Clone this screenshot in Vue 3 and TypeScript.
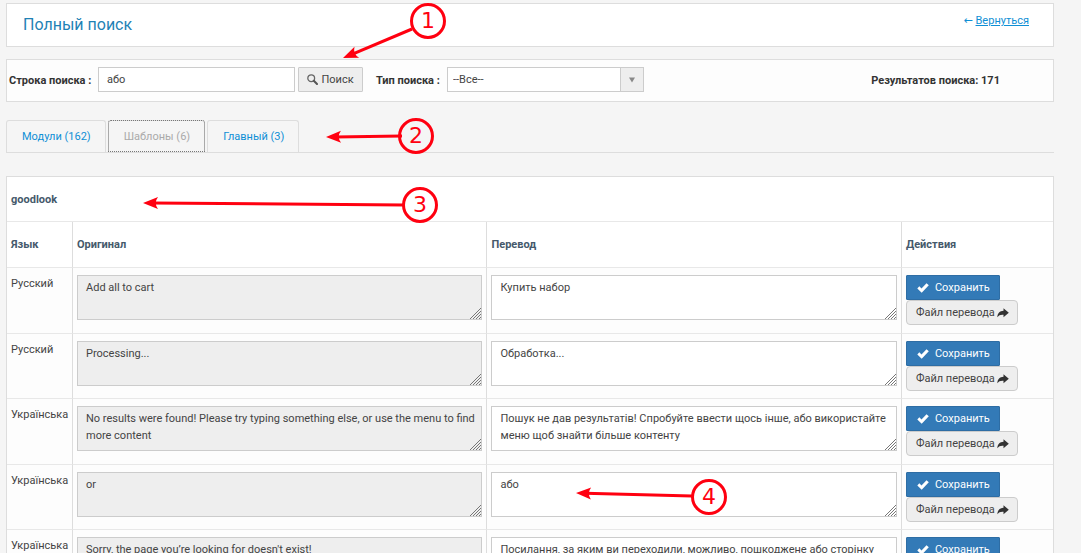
<script setup lang="ts">
import { ref } from 'vue'

interface Tab {
  id: string
  title: string
  count: number
}

interface Entry {
  lang: string
  original: string
  translation: string
}

interface Mark {
  label: number
  cx: number
  cy: number
  from: [number, number]
  tip: [number, number]
}

const query = ref('або')
const searchType = ref('all')
const activeTab = ref('templates')
const total = 171

const tabs: Tab[] = [
  { id: 'modules', title: 'Модули', count: 162 },
  { id: 'templates', title: 'Шаблоны', count: 6 },
  { id: 'main', title: 'Главный', count: 3 },
]

const entries = ref<Entry[]>([
  { lang: 'Русский', original: 'Add all to cart', translation: 'Купить набор' },
  { lang: 'Русский', original: 'Processing...', translation: 'Обработка...' },
  {
    lang: 'Українська',
    original: 'No results were found! Please try typing something else, or use the menu to find more content',
    translation: 'Пошук не дав результатів! Спробуйте ввести щось інше, або використайте меню щоб знайти більше контенту',
  },
  { lang: 'Українська', original: 'or', translation: 'або' },
  {
    lang: 'Українська',
    original: "Sorry, the page you’re looking for doesn't exist!",
    translation: 'Посилання, за яким ви переходили, можливо, пошкоджене або сторінку',
  },
])

const marks: Mark[] = [
  { label: 1, cx: 428, cy: 21, from: [412, 29], tip: [343, 58] },
  { label: 2, cx: 416, cy: 136, from: [402, 136], tip: [326, 137] },
  { label: 3, cx: 420, cy: 205, from: [404, 205], tip: [143, 203] },
  { label: 4, cx: 709, cy: 497, from: [692, 496], tip: [576, 493] },
]

function angle(m: Mark): number {
  return (Math.atan2(m.tip[1] - m.from[1], m.tip[0] - m.from[0]) * 180) / Math.PI
}

function length(m: Mark): number {
  return Math.hypot(m.tip[0] - m.from[0], m.tip[1] - m.from[1])
}
</script>

<template>
  <main class="page">
    <header class="panel heading">
      <h1>Полный поиск</h1>
      <div class="back"><span class="arrow">←</span> <a href="#">Вернуться</a></div>
    </header>

    <form class="panel search" @submit.prevent>
      <label class="query-label" for="query">Строка поиска :</label>
      <input id="query" v-model="query" class="query" type="text" />
      <button class="find" type="submit">
        <svg width="11" height="11" viewBox="0 0 11 11" aria-hidden="true">
          <circle cx="4.2" cy="4.2" r="3.4" fill="none" stroke="#666" stroke-width="1.3" />
          <path d="M6.8 6.8L10 10" stroke="#555" stroke-width="2" stroke-linecap="round" />
        </svg>
        Поиск
      </button>
      <label class="type-label" for="type">Тип поиска :</label>
      <div class="select-box">
        <select id="type" v-model="searchType">
          <option value="all">--Все--</option>
        </select>
        <span class="caret">
          <svg width="8" height="6" viewBox="0 0 8 6" aria-hidden="true"><path d="M1 0.5H7L4 5.5Z" fill="#888" /></svg>
        </span>
      </div>
      <strong class="total">Результатов поиска: {{ total }}</strong>
    </form>

    <nav class="tabs">
      <button
        v-for="tab in tabs"
        :key="tab.id"
        type="button"
        class="tab"
        :class="{ active: tab.id === activeTab }"
        @click="activeTab = tab.id"
      >
        {{ tab.title }} ({{ tab.count }})
      </button>
    </nav>

    <table class="results">
      <colgroup>
        <col class="col-lang" />
        <col />
        <col />
        <col class="col-actions" />
      </colgroup>
      <thead>
        <tr>
          <th colspan="4">goodlook</th>
        </tr>
        <tr class="columns">
          <th>Язык</th>
          <th>Оригинал</th>
          <th>Перевод</th>
          <th>Действия</th>
        </tr>
      </thead>
      <tbody>
        <tr v-for="(entry, i) in entries" :key="i">
          <td>{{ entry.lang }}</td>
          <td>
            <textarea class="original" readonly aria-label="Оригинал" :value="entry.original"></textarea>
          </td>
          <td>
            <textarea v-model="entry.translation" aria-label="Перевод"></textarea>
          </td>
          <td>
            <div class="actions">
              <button type="button" class="save">
                <svg width="12" height="10" viewBox="0 0 12 10" aria-hidden="true">
                  <path d="M0.3 5.5L2.3 3.3L4.5 5.4L9.5 0.2L11.8 2.2L4.7 9.8Z" fill="#fff" />
                </svg>
                Сохранить
              </button>
              <button type="button" class="file">
                Файл перевода
                <svg width="12" height="10" viewBox="0 0 12 10" aria-hidden="true">
                  <path d="M6.5 0.3L11.8 4.8L6.5 9.2V6.7C3.7 6.5 1.8 7 0.3 9.3C0.5 5.2 2.8 2.8 6.5 2.7Z" fill="#333" />
                </svg>
              </button>
            </div>
          </td>
        </tr>
      </tbody>
    </table>

    <svg class="marks" width="1081" height="553" viewBox="0 0 1081 553" aria-hidden="true">
      <g v-for="m in marks" :key="m.label">
        <g :transform="`translate(${m.from[0]} ${m.from[1]}) rotate(${angle(m)})`">
          <line x1="0" y1="0" :x2="length(m) - 9" y2="0" />
          <path :transform="`translate(${length(m)} 0)`" d="M0 0L-15 -6Q-10.500 0 -15 6Z" />
        </g>
        <circle :cx="m.cx" :cy="m.cy" r="16.500" />
        <text :x="m.cx" :y="m.cy + 7">{{ m.label }}</text>
      </g>
    </svg>
  </main>
</template>

<style>
html,
body {
  overflow: hidden;
  background: #f5f5f5;
}
</style>

<style scoped>
.page {
  position: relative;
  height: 100vh;
  overflow: hidden;
  box-sizing: border-box;
  padding: 3px 27px 0 6px;
  font-family: Roboto, 'Liberation Sans', sans-serif;
  font-size: 11px;
  line-height: 17px;
  color: #444;
}

.page *,
.page *::after {
  box-sizing: border-box;
}

button,
input,
select,
textarea {
  margin: 0;
  font: inherit;
  color: inherit;
}

button {
  display: inline-flex;
  align-items: center;
  cursor: pointer;
}

.panel {
  display: flex;
  border: 1px solid #ddd;
}

.heading {
  justify-content: space-between;
  height: 44px;
  padding: 0 24px 0 16px;
  background: #fff;
}

h1 {
  margin: 0;
  font-size: 16px;
  font-weight: 400;
  line-height: 42px;
  color: #1f82b5;
}

.back {
  padding-top: 8px;
  color: #0f8fd5;
}

.back a {
  color: inherit;
}

.arrow {
  font-family: 'DejaVu Sans', sans-serif;
}

.search {
  align-items: center;
  height: 43px;
  margin-top: 12px;
  padding: 0 53px 2px 2px;
  background: #fdfdfd;
}

.search label,
.total {
  padding-top: 2px;
  font-weight: 700;
  color: #333;
  white-space: nowrap;
}

.query-label {
  width: 89px;
}

.query {
  width: 197px;
  height: 25px;
  padding: 0 8px;
  background: #fff;
  border: 1px solid #ccc;
}

.find {
  justify-content: center;
  width: 65px;
  height: 25px;
  gap: 3px;
  margin-left: 3px;
  padding: 0;
  background: #eee;
  border: 1px solid #ccc;
  border-radius: 1px;
}

.type-label {
  width: 71px;
  margin-left: 13px;
}

.select-box {
  display: flex;
  width: 197px;
  height: 25px;
  background: #fff;
  border: 1px solid #ccc;
}

.select-box select {
  flex: 1;
  padding: 0 5px;
  appearance: none;
  background: transparent;
  border: 0;
}

.caret {
  display: flex;
  align-items: center;
  justify-content: center;
  width: 23px;
  background: #eee;
  border-left: 1px solid #ccc;
}

.total {
  margin-left: auto;
}

.tabs {
  display: flex;
  gap: 2px;
  margin-top: 18px;
  border-bottom: 1px solid #ddd;
}

.tab {
  height: 32px;
  padding: 0 14px 0 15px;
  background: transparent;
  border: 1px solid #ddd;
  border-bottom: 0;
  border-radius: 3px 3px 0 0;
  color: #0f8fd5;
}

.tab.active {
  color: #aaa;
  outline: 1px dotted #777;
  outline-offset: -1px;
}

.results {
  width: 100%;
  margin-top: 23px;
  table-layout: fixed;
  border-collapse: separate;
  border-spacing: 0;
  background: #fdfdfd;
  border: 1px solid #ddd;
}

.col-lang {
  width: 66px;
}

.col-actions {
  width: 151px;
}

th {
  height: 45px;
  padding: 0 4px;
  background: #fff;
  text-align: left;
  color: #45596b;
}

.columns th {
  height: 46px;
}

td {
  height: 65px;
  padding: 7px 4px 0;
  vertical-align: top;
}

tbody tr:nth-child(odd) td {
  height: 66px;
}

th,
td {
  border-bottom: 1px solid #e8e8e8;
}

.columns th:not(:last-child),
td:not(:last-child) {
  border-right: 1px solid #ddd;
}

textarea {
  display: block;
  width: 100%;
  height: 45px;
  padding: 3px 2px 3px 8px;
  overflow: hidden;
  background: #fff;
  border: 1px solid #ccc;
  border-radius: 0;
  resize: both;
}

textarea.original {
  background: #eee;
}

textarea::-webkit-resizer {
  background: url("data:image/svg+xml,%3Csvg xmlns='http://www.w3.org/2000/svg' width='12' height='12' viewBox='0 0 12 12'%3E%3Cpath d='M1 12L12 1M4 12L12 4M7 12L12 7M10 12L12 10' stroke='%23777' fill='none'/%3E%3C/svg%3E") right bottom no-repeat;
}

.actions {
  display: flex;
  flex-direction: column;
  align-items: flex-start;
}

.save,
.file {
  height: 25px;
}

.save {
  gap: 6px;
  padding: 0 9px 0 10px;
  background: #337ab7;
  border: 1px solid #2e6da4;
  border-radius: 1px;
  color: #fff;
}

.file {
  gap: 2px;
  padding: 0 8px 0 9px;
  background: #eee;
  border: 1px solid #ccc;
  border-radius: 4px;
}

.marks {
  position: absolute;
  top: 0;
  left: 0;
  pointer-events: none;
}

.marks line,
.marks circle {
  fill: none;
  stroke: #ff0010;
  stroke-width: 3px;
}

.marks path,
.marks text {
  fill: #ff0010;
}

.marks text {
  font-family: 'DejaVu Sans', sans-serif;
  font-size: 22px;
  text-anchor: middle;
}
</style>
